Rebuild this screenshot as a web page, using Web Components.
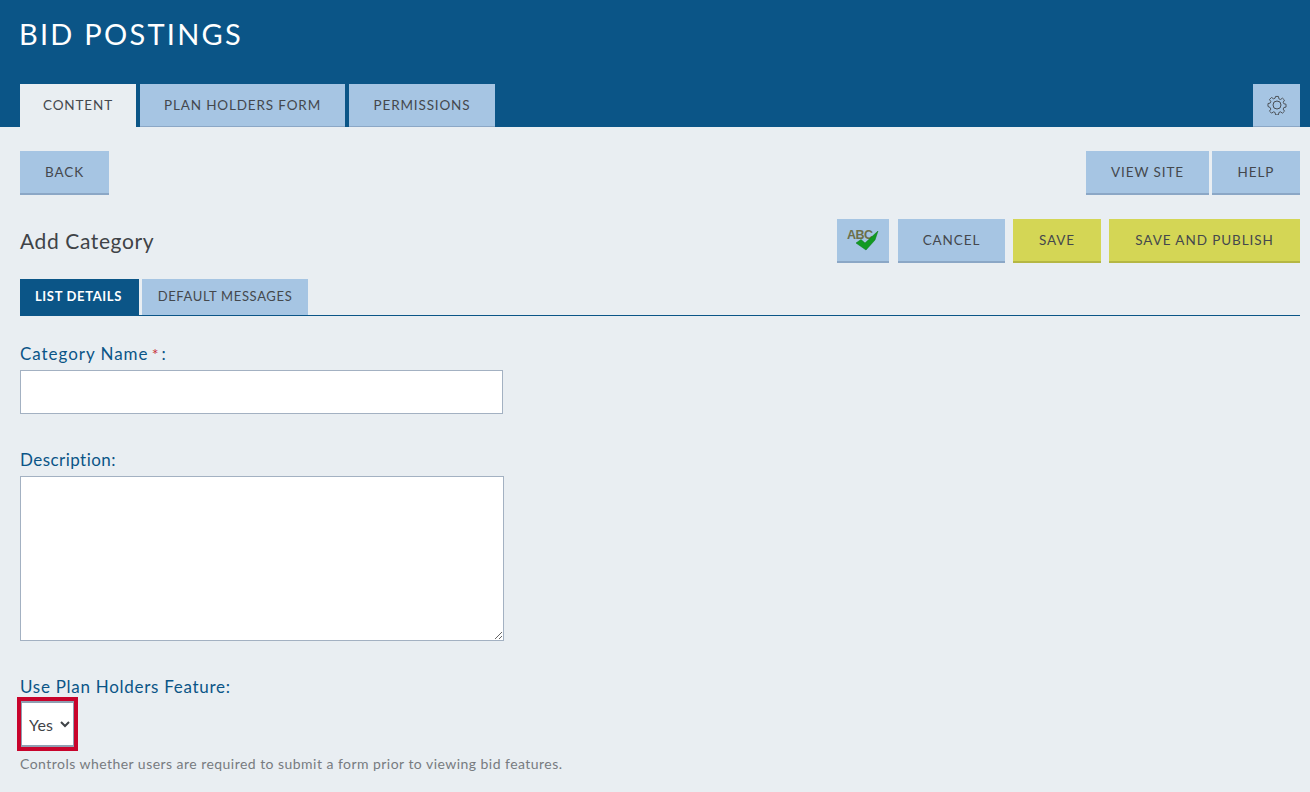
<!DOCTYPE html>
<html lang="en"><head><meta charset="utf-8"><title>Bid Postings</title>
<style>
html,body{margin:0;padding:0;background:#e9eef2;font-family:Lato,"Open Sans",sans-serif;color:#3f4347}
</style></head><body>
<app-page>
  <app-header slot="header" heading="BID POSTINGS">
    <app-btn tab="active" w="116">CONTENT</app-btn>
    <app-btn tab="on" w="205" style="margin-left:4px">PLAN HOLDERS FORM</app-btn>
    <app-btn tab="on" w="146" style="margin-left:4px">PERMISSIONS</app-btn>
    <app-btn slot="end" tab="on" w="47"><gear-icon></gear-icon></app-btn>
  </app-header>
  <app-bar style="margin-top:24px">
    <app-btn w="89">BACK</app-btn>
    <span slot="end" style="display:flex;gap:3px"><app-btn w="123">VIEW SITE</app-btn><app-btn w="88">HELP</app-btn></span>
  </app-bar>
  <app-bar style="margin-top:24px">
    <page-title>Add Category</page-title>
    <span slot="end" style="display:flex;gap:8px">
      <app-btn w="52" style="margin-right:1px"><spell-icon></spell-icon></app-btn>
      <app-btn w="107">CANCEL</app-btn>
      <app-btn w="88" kind="save">SAVE</app-btn>
      <app-btn w="191" kind="save">SAVE AND PUBLISH</app-btn>
    </span>
  </app-bar>
  <sub-tabs>
    <sub-tab active w="119">LIST DETAILS</sub-tab>
    <sub-tab w="166">DEFAULT MESSAGES</sub-tab>
  </sub-tabs>
  <form-field style="margin-top:26px;--ls:.95px" label="Category Name" required><input-box></input-box></form-field>
  <form-field style="margin-top:34px;--ls:.45px" label="Description:"><area-box></area-box></form-field>
  <form-field style="margin-top:34px;--ls:.72px" label="Use Plan Holders Feature:" hint="Controls whether users are required to submit a form prior to viewing bid features."><select-box></select-box></form-field>
</app-page>
<script>
function def(name, css, html, extra){
  customElements.define(name, class extends HTMLElement{
    constructor(){super();this.attachShadow({mode:'open'}).innerHTML='<style>'+css+'</style>'+html;}
    connectedCallback(){ if(extra) extra(this); }
  });
}
def('app-page', ':host{display:block;width:1310px;height:792px;overflow:hidden}.b{padding:0 10px 0 20px}', '<slot name="header"></slot><div class="b"><slot></slot></div>');
def('app-header', ':host{display:flex;flex-direction:column;justify-content:space-between;height:127px;background:#0b5587;box-sizing:border-box;padding:0 10px 0 20px}h1{margin:0 0 0 -1px;padding-top:16px;font:400 29px/36px Lato,sans-serif;letter-spacing:2.25px;color:#fff}.t{display:flex;justify-content:space-between}.l{display:flex}', '<h1></h1><div class="t"><div class="l"><slot></slot></div><slot name="end"></slot></div>', el=>{el.shadowRoot.querySelector('h1').textContent=el.getAttribute('heading')});
def('app-btn', ':host{display:flex;align-items:center;justify-content:center;box-sizing:border-box;height:44px;background:#a6c5e3;border-bottom:2px solid #8ba7c6;font:400 13.5px/20px Lato,sans-serif;letter-spacing:.92px;color:#44484d;white-space:nowrap}:host([kind=save]){background:#d4d655;border-bottom-color:#b5b744}:host([tab]){height:43px;border-bottom-width:1px;letter-spacing:.85px}:host([tab=active]){background:#e9eef2;border-bottom:0;padding-bottom:1px}', '<slot></slot>', el=>{el.style.width=el.getAttribute('w')+'px'});
def('app-bar', ':host{display:flex;justify-content:space-between;align-items:center;height:44px;width:1280px}', '<slot></slot><slot name="end"></slot>');
def('page-title', ':host{display:block;font:400 21px/28px Lato,sans-serif;letter-spacing:.6px;color:#3f4347;margin-top:-1px}', '<slot></slot>');
def('sub-tabs', ':host{display:flex;gap:3px;width:1280px;margin-top:16px;height:36px;border-bottom:1px solid #0b5587}', '<slot></slot>');
def('sub-tab', ':host{display:flex;align-items:center;justify-content:center;box-sizing:border-box;height:36px;padding-bottom:2px;background:#a6c5e3;font:400 13px/18px Lato,sans-serif;letter-spacing:.65px;color:#44484d;white-space:nowrap}:host([active]){height:37px;background:#0b5587;color:#fff;font-weight:700;letter-spacing:.65px;padding:0 2px 4px 0}', '<slot></slot>', el=>{el.style.width=el.getAttribute('w')+'px'});
def('form-field', ':host{display:block;width:600px}label{display:block;font:400 17px/24px Lato,sans-serif;letter-spacing:var(--ls,.3px);color:#0b5587;margin-bottom:4px}i{font-style:normal;color:#c8303a;font-size:16px;line-height:0;margin:0 2px 0 -2px}.h{font:400 14px/18px Lato,sans-serif;letter-spacing:.46px;color:#777b80;margin-top:4px}', '<label></label><slot></slot><div class="h"></div>', el=>{
  const l=el.shadowRoot.querySelector('label');l.textContent=el.getAttribute('label');
  if(el.hasAttribute('required')){l.append(' ');const i=document.createElement('i');i.textContent='*';l.append(i,':');}
  const h=el.shadowRoot.querySelector('.h');if(el.hasAttribute('hint'))h.textContent=el.getAttribute('hint');else h.remove();
});
def('input-box', ':host{display:block}input{display:block;box-sizing:border-box;width:483px;height:44px;border:1px solid #a3b1c2;background:#fff;margin:0;padding:0 8px;outline:0;border-radius:0}', '<input type="text" aria-label="Category Name">');
def('area-box', ':host{display:block}textarea{display:block;box-sizing:border-box;width:484px;height:165px;border:1px solid #a3b1c2;background:#fff;margin:0;padding:8px;outline:0;border-radius:0}', '<textarea aria-label="Description"></textarea>');
def('select-box', ':host{display:block;margin-left:-3px;margin-top:-6px;width:61px;height:54px;box-sizing:border-box;border:4px solid #c8042c}select{display:block;box-sizing:border-box;width:53px;height:46px;border:0;border-top:2px solid #8f9fb2;border-bottom:2px solid #8f9fb2;border-left:1px solid #8f9fb2;border-right:1px solid #8f9fb2;background:#fff;margin:0;padding:0 0 0 3px;font:400 16px Lato,sans-serif;letter-spacing:.2px;color:#3f4347;outline:0;border-radius:0}', '<select aria-label="Use Plan Holders Feature"><option>Yes</option><option>No</option></select>');
def('gear-icon', ':host{display:block;width:20px;height:20px}svg{display:block}', '<svg width="20" height="20" viewBox="0 0 20 20" fill="none" stroke="#4a4e53" stroke-width="1" stroke-linejoin="round"><circle cx="10" cy="10" r="4"/><path d="M8.5 1h3l.5 2.500 1.600.7 2.200-1.400 2.100 2.100-1.400 2.200.7 1.600 2.300.5v3l-2.300.5-.7 1.600 1.400 2.200-2.100 2.100-2.200-1.400-1.600.7-.5 2.500h-3l-.5-2.500-1.600-.7-2.200 1.400-2.100-2.100 1.400-2.200-.7-1.600L.5 11.500v-3l2.300-.5.7-1.600-1.400-2.200 2.100-2.100 2.200 1.400 1.600-.7z" transform="translate(.5 .5) scale(.95)"/></svg>');
def('spell-icon', ':host{display:block;position:relative;width:32px;height:24px}span{position:absolute;left:0;top:-1px;font:700 12.5px/16px "Liberation Sans",sans-serif;letter-spacing:-.5px;color:#6b6f4a}svg{position:absolute;left:9px;top:3px}', '<span>ABC</span><svg width="23" height="20" viewBox="0 0 23 20"><path d="M0 12L5 8.500 9 12 22 0 19 9 10 19z" fill="#129a22" stroke="#0c7a18" stroke-width=".5"/></svg>');
</script>
</body></html>
